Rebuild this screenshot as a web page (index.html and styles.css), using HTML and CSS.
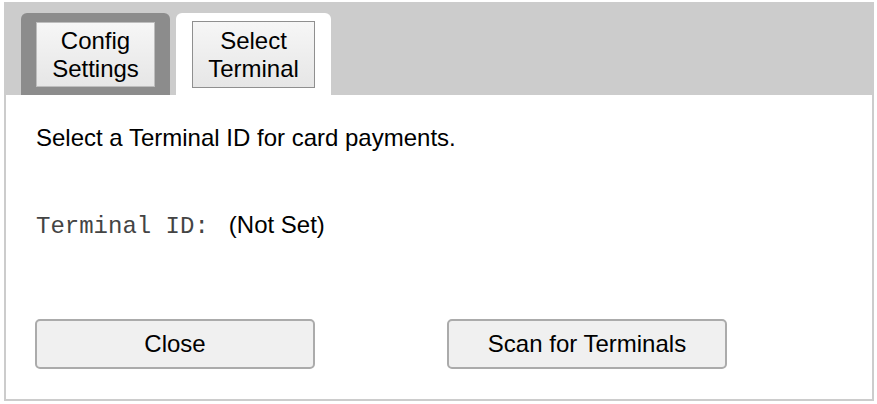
FILE: index.html
```html
<!DOCTYPE html>
<html>
<head>
<meta charset="utf-8">
<link rel="stylesheet" href="styles.css">
</head>
<body>
<div class="app">
  <div class="tabbar">
    <div class="tab tab-inactive"><button class="tab-btn tab-btn-config">Config<br>Settings</button></div>
    <div class="tab tab-active"><button class="tab-btn tab-btn-select">Select<br>Terminal</button></div>
  </div>
  <div class="content">
    <p class="intro">Select a Terminal ID for card payments.</p>
    <p class="terminal"><span class="label">Terminal ID:</span><span class="value">(Not Set)</span></p>
    <div class="actions">
      <button class="action">Close</button>
      <button class="action">Scan for Terminals</button>
    </div>
  </div>
</div>
</body>
</html>
```

FILE: styles.css
```css
html, body {
  margin: 0;
  padding: 0;
  background: #ffffff;
}
body {
  font-family: "Liberation Sans", Arial, sans-serif;
  color: #000;
}
.app {
  margin: 2px 0 0 4px;
  width: 870px;
  height: 399px;
  box-sizing: border-box;
  border: 2px solid #cccccc;
  border-top: none;
  display: flex;
  flex-direction: column;
}
.tabbar {
  height: 93px;
  box-sizing: border-box;
  background: #cccccc;
  margin: 0 -2px;
  padding: 11px 0 0 17px;
  display: flex;
  gap: 6px;
  align-items: flex-end;
}
.tab {
  height: 82px;
  box-sizing: border-box;
  border-radius: 6px 6px 0 0;
  display: flex;
  align-items: flex-start;
}
.tab-inactive {
  width: 149px;
  background: #8c8c8c;
  padding: 9px 0 0 15px;
}
.tab-active {
  width: 155px;
  background: #ffffff;
  padding: 8px 0 0 16px;
}
.tab-btn {
  font-family: "Liberation Sans", Arial, sans-serif;
  font-size: 24px;
  line-height: 28px;
  color: #000;
  background: linear-gradient(#f6f6f6, #e6e6e6);
  padding: 0;
  margin: 0;
  text-align: center;
}
.tab-btn-config {
  width: 119px;
  height: 65px;
  border: 1px solid #bdbdbd;
}
.tab-btn-select {
  width: 123px;
  height: 67px;
  border: 1px solid #8f8f8f;
}
.content {
  flex: 1;
  padding: 0 29px;
  display: flex;
  flex-direction: column;
}
.intro {
  margin: 29px 0 0 1px;
  font-size: 24px;
  line-height: 28px;
}
.terminal {
  margin: 59px 0 0 1px;
  font-size: 24px;
  line-height: 28px;
  display: flex;
  align-items: baseline;
}
.label {
  font-family: "Liberation Mono", "Courier New", monospace;
  font-size: 24px;
  color: #444444;
}
.value {
  margin-left: 20px;
}
.actions {
  margin-top: 78px;
  display: flex;
  gap: 132px;
}
.action {
  width: 280px;
  height: 50px;
  box-sizing: border-box;
  border: 2px solid #ababab;
  border-radius: 5px;
  background: #f0f0f0;
  font-family: "Liberation Sans", Arial, sans-serif;
  font-size: 24px;
  color: #000;
  padding: 0;
  margin: 0;
}
```
